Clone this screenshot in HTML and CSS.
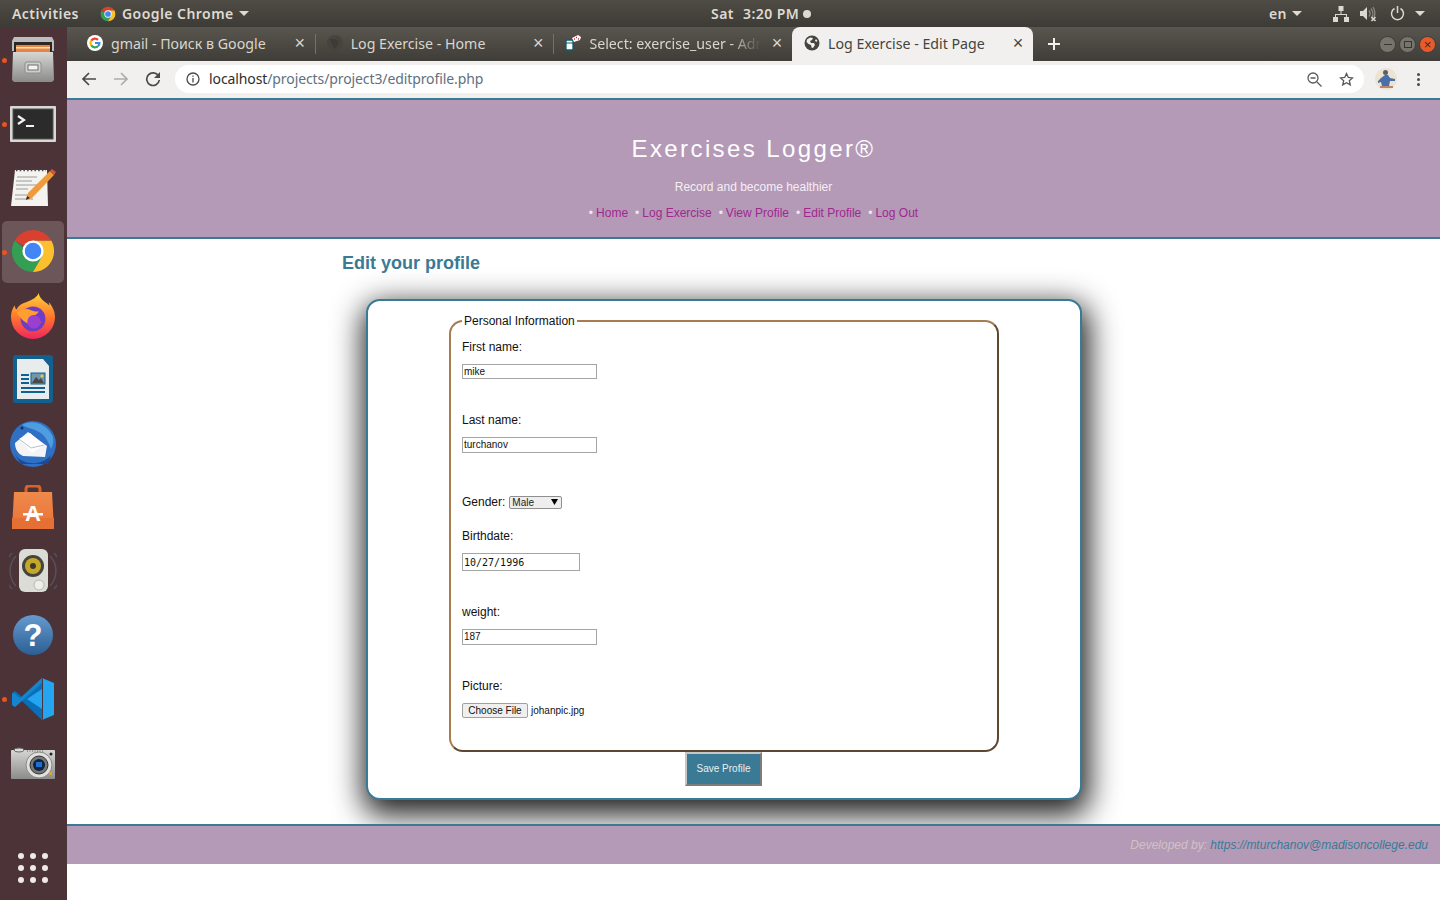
FILE: index.html
```html
<!DOCTYPE html>
<html lang="en">
<head>
  <meta charset="UTF-8">
  <title>Log Exercise - Edit Page</title>
  <link rel="stylesheet" href="styles.css">
</head>
<body>
  <svg class="defs" width="0" height="0">
    <defs>
      <symbol id="chrome" viewBox="0 0 48 48">
        <path fill="#349e53" d="M4.95 13A22 22 0 0 0 24 46L33.53 29.5H24Z"/>
        <path fill="#fbc02d" d="M43.05 13A22 22 0 0 1 24 46L33.53 29.5 24 13Z"/>
        <path fill="#d9402f" d="M24 2A22 22 0 0 1 43.05 13H24L14.47 18.5 4.95 13A22 22 0 0 1 24 2Z"/>
        <circle cx="24" cy="24" r="11" fill="#fff"/>
        <circle cx="24" cy="24" r="8.6" fill="#4285f4"/>
      </symbol>
      <linearGradient id="metal" x1="0" y1="0" x2="0" y2="1">
        <stop offset="0" stop-color="#d6d6d4"/><stop offset="1" stop-color="#8b8b89"/>
      </linearGradient>
      <linearGradient id="bluedisc" x1="0" y1="0" x2="0" y2="1">
        <stop offset="0" stop-color="#659bd0"/><stop offset="1" stop-color="#2c5f93"/>
      </linearGradient>
      <linearGradient id="bag" x1="0" y1="0" x2="0" y2="1">
        <stop offset="0" stop-color="#ee8a4b"/><stop offset="1" stop-color="#ea7235"/>
      </linearGradient>
      <linearGradient id="fox" x1="0" y1="0" x2="0" y2="1">
        <stop offset="0" stop-color="#ffd33d"/><stop offset=".5" stop-color="#ff7a2a"/><stop offset="1" stop-color="#f1255f"/>
      </linearGradient>
    </defs>
  </svg>

  <div class="desktop">
    <header class="panel">
      <div class="panel-left">
        <span class="activities">Activities</span>
        <svg class="panel-chrome" width="16" height="16"><use href="#chrome"/></svg>
        <span>Google Chrome</span>
        <i class="caret"></i>
      </div>
      <div class="panel-clock">
        <span>Sat</span><span>3:20 PM</span><i class="clock-dot"></i>
      </div>
      <div class="panel-right">
        <span class="lang">en</span>
        <i class="caret lang-caret"></i>
        <svg class="tray-net" width="16" height="16" viewBox="0 0 16 16" fill="#dbd8d2">
          <rect x="5.5" y="0" width="5" height="5"/><rect x="0" y="11" width="5" height="5"/><rect x="11" y="11" width="5" height="5"/>
          <path d="M7.5 5h1v3H14v3h-1V9H3v2H2V8h5.500z"/>
        </svg>
        <svg class="tray-vol" width="17" height="16" viewBox="0 0 17 16" fill="none">
          <path fill="#dbd8d2" d="M0 5h3l4-4v13l-4-4H0z"/>
          <path stroke="#8b8880" stroke-width="1.300" d="M9 4.500a5 5 0 0 1 0 6M11 2.500a8 8 0 0 1 0 10M13 1a11 11 0 0 1 1 10"/>
          <path stroke="#dbd8d2" stroke-width="1.600" d="M11.500 11l4 4m0-4l-4 4"/>
        </svg>
        <svg class="tray-power" width="15" height="15" viewBox="0 0 15 15" fill="none" stroke="#dbd8d2" stroke-width="1.500">
          <path d="M4.500 2.500a6 6 0 1 0 6 0M7.500 0v7"/>
        </svg>
        <i class="caret power-caret"></i>
      </div>
    </header>

    <div class="workspace">
      <nav class="dock">
        <div class="dock-item running">
          <svg width="44" height="46" viewBox="0 0 44 46">
            <path fill="#bdbdbb" d="M3 0h38l2 4v10H1V4z"/>
            <rect x="3" y="5" width="38" height="12" fill="#2a2826"/>
            <rect x="5" y="8" width="34" height="7" fill="#e8843c"/>
            <rect x="5" y="10" width="34" height="1.500" fill="#f7e3c4"/>
            <path fill="url(#metal)" d="M2 15h40l1 28-2 2H3l-2-2z"/>
            <rect x="14" y="25" width="16" height="11" rx="2" fill="#cfcfcd" stroke="#8d8d8b"/>
            <rect x="17" y="28" width="10" height="5" fill="#f3f3f1" stroke="#6f6f6d"/>
          </svg>
        </div>
        <div class="dock-item running">
          <svg width="46" height="36" viewBox="0 0 46 36">
            <rect width="46" height="36" rx="1" fill="#d8d8d6"/>
            <rect x="3" y="3" width="40" height="30" fill="#2b2b2b" stroke="#555"/>
            <path d="M8 10l6 4-6 4" fill="none" stroke="#f2f2f2" stroke-width="2.200"/>
            <rect x="16" y="19" width="8" height="2" fill="#f2f2f2"/>
          </svg>
        </div>
        <div class="dock-item">
          <svg width="46" height="44" viewBox="0 0 46 44">
            <path fill="#f4f3ef" d="M5 4h32l1 36H1z"/>
            <path stroke="#444" stroke-width="2.500" stroke-dasharray="1.500 2.200" fill="none" d="M6 4h30"/>
            <path stroke="#9a9a96" stroke-width="1" fill="none" d="M7 11h20M6 15h16M6 19h22M6 23h12M5 29h14M5 33h18"/>
            <path fill="#f09a3a" d="M40 5l4 4-22 23-6 2 2-7z"/>
            <path fill="#d8503f" d="M40 5l2-2 4 3-2 3z"/>
            <path fill="#2b2b2b" d="M16 34l1-4 3 2z"/>
          </svg>
        </div>
        <div class="dock-item running active">
          <svg class="dock-chrome" width="46" height="46"><use href="#chrome"/></svg>
        </div>
        <div class="dock-item">
          <svg width="44" height="46" viewBox="0 0 46 48">
            <path fill="url(#fox)" d="M29 0c1 7 6 8 11 13 0-1 0-3-1-4 5 5 7 11 7 16a23 23 0 0 1-46 0c0-5 2-10 4-12 0 2 1 4 2 4 2-5 6-6 11-8 5-2 10-4 12-9z"/>
            <circle cx="23" cy="27" r="13" fill="#6f3cc4"/>
            <path fill="#ffa02e" d="M6 20c6-4 11-4 15-2 3 1 6 2 8 1-1 3-5 5-9 5 1 4 6 7 12 6-4 4-11 5-16 1-5-3-8-7-10-11z"/>
            <circle cx="24" cy="30" r="7" fill="#9a3fd1"/>
          </svg>
        </div>
        <div class="dock-item">
          <svg width="40" height="48" viewBox="0 0 40 48">
            <rect width="40" height="48" rx="3" fill="#12608f"/>
            <path fill="#e9eced" d="M4 4h26l6 7v33H4z"/>
            <path fill="#12608f" d="M29 1h10v10z"/>
            <path d="M8 20h8M8 24h8M8 28h8M8 33h24M8 37h24" stroke="#12608f" stroke-width="2"/>
            <rect x="18" y="18" width="14" height="11" fill="#6f96aa" stroke="#12608f"/>
            <path fill="#4a4a4a" d="M19 28l4-6 3 3 2-2 3 5z"/>
            <circle cx="29" cy="21" r="1.500" fill="#f4c64a"/>
          </svg>
        </div>
        <div class="dock-item">
          <svg width="48" height="48" viewBox="0 0 48 48">
            <circle cx="24" cy="25" r="23" fill="#2f6fc4"/>
            <path fill="#1c4a94" d="M6 36c8 10 26 12 36 0l-3 9H12z"/>
            <path fill="#4d9de0" d="M13 6C22 0 38 4 44 18c1 4 0 8-2 12-2-6-6-14-12-17-5-3-12-4-17-7z"/>
            <path fill="#f4f4f6" d="M6 24l13-11 19 14-2 11-22-1c-5-2-8-7-8-13z"/>
            <path fill="#fff" d="M10 20l11-6 14 12-12 8z"/>
            <path d="M10 20l12 9 13-3" fill="none" stroke="#b9bfca"/>
            <circle cx="13" cy="9" r="1.500" fill="#16315f"/>
          </svg>
        </div>
        <div class="dock-item">
          <svg width="42" height="44" viewBox="0 0 42 44">
            <path d="M14 12V4c0-2 1-3 3-3h8c2 0 3 1 3 3v8" fill="none" stroke="#d9622c" stroke-width="3"/>
            <path fill="url(#bag)" d="M2 7h38l2 37H0z"/>
            <rect x="0" y="33" width="42" height="11" fill="#e66f33"/>
            <text x="21" y="36" class="bag-letter">A</text>
            <rect x="11" y="28" width="20" height="2.500" fill="#fff"/>
          </svg>
        </div>
        <div class="dock-item">
          <svg width="48" height="46" viewBox="0 0 48 46">
            <path d="M7 8a22 22 0 0 0 0 30M41 8a22 22 0 0 1 0 30M3 5a26 26 0 0 0 0 36M45 5a26 26 0 0 1 0 36" fill="none" stroke="#5a6677" stroke-width="1.500" opacity=".6"/>
            <rect x="10" y="1" width="29" height="43" rx="6" fill="#dcdcd6"/>
            <circle cx="24" cy="18" r="11" fill="#45453f"/>
            <circle cx="24" cy="18" r="8" fill="#c6a828"/>
            <circle cx="24" cy="18" r="3" fill="#3c3a2c"/>
            <circle cx="30" cy="37" r="5" fill="#efefea" stroke="#b8b8b2"/>
          </svg>
        </div>
        <div class="dock-item">
          <svg width="40" height="40" viewBox="0 0 40 40">
            <circle cx="20" cy="20" r="20" fill="url(#bluedisc)"/>
            <text x="20" y="31" class="help-mark">?</text>
          </svg>
        </div>
        <div class="dock-item running">
          <svg width="42" height="42" viewBox="0 0 42 42">
            <path fill="#0a6fb8" d="M30 0L10 19 3 13 0 15v12l3 2 7-6 20 19z"/>
            <path fill="#1a8fd8" d="M0 27l3 2L30 5V0L8 20 2 15 0 16z" opacity=".7"/>
            <path fill="#23a5f1" d="M30 0l12 5v32l-12 5 1-1V1zM30 11L15 21l15 10z"/>
          </svg>
        </div>
        <div class="dock-item">
          <svg width="44" height="32" viewBox="0 0 44 32">
            <rect y="3" width="44" height="29" rx="1" fill="url(#metal)"/>
            <ellipse cx="8" cy="3" rx="5" ry="2" fill="#dcdcda" stroke="#666"/>
            <path d="M16 4h16" stroke="#555" stroke-dasharray="1 1.500"/>
            <circle cx="28" cy="18" r="13" fill="#e0e0de" stroke="#888"/>
            <circle cx="28" cy="18" r="9" fill="#777" stroke="#333"/>
            <circle cx="28" cy="18" r="6" fill="#10233f"/>
            <rect x="25" y="15" width="6" height="5" fill="#1f6fd0"/>
            <rect x="38" y="25" width="3" height="3" fill="#e8a020"/>
            <circle cx="40" cy="7" r="1.500" fill="#222"/>
          </svg>
        </div>
        <div class="dock-apps">
          <i></i><i></i><i></i><i></i><i></i><i></i><i></i><i></i><i></i>
        </div>
      </nav>

      <div class="browser">
        <div class="tabstrip">
          <div class="tab">
            <svg class="favicon" width="16" height="16" viewBox="0 0 16 16" fill="none" stroke-width="2.200">
              <circle cx="8" cy="8" r="8" fill="#fff" stroke="none"/>
              <path stroke="#ea4335" d="M4.300 5.600A4.400 4.400 0 0 1 11 4.900"/>
              <path stroke="#fbbc05" d="M4.300 5.600a4.400 4.400 0 0 0 0 4.800"/>
              <path stroke="#34a853" d="M4.300 10.400a4.400 4.400 0 0 0 6.900.6"/>
              <path stroke="#4285f4" d="M11.200 11A4.400 4.400 0 0 0 12.400 8H8"/>
            </svg>
            <span class="tab-title">gmail - Поиск в Google</span>
            <span class="tab-close">×</span>
          </div>
          <div class="tab">
            <svg class="favicon" width="16" height="16" viewBox="0 0 16 16">
              <circle cx="8" cy="8" r="8" fill="#45443f"/>
              <path fill="#3c3b37" d="M3 4h6l3 4-4 6-3-4z"/>
            </svg>
            <span class="tab-title">Log Exercise - Home</span>
            <span class="tab-close">×</span>
          </div>
          <div class="tab">
            <svg class="favicon" width="16" height="16" viewBox="0 0 16 16">
              <rect x="1" y="5" width="7" height="10" rx="1" fill="#fff" stroke="#0d5f6e" stroke-width="1.300"/>
              <path d="M1 8h7" stroke="#0d5f6e"/>
              <path fill="#fff" d="M7 3l6-3 3 2-1 3-6 2z"/>
              <path d="M9 4h1M11 2.500h1M13 4h1" stroke="#d8262c" stroke-width="1.300"/>
            </svg>
            <span class="tab-title tab-faded">Select: exercise_user - Admin</span>
            <span class="tab-close">×</span>
          </div>
          <div class="tab tab-active">
            <svg class="favicon" width="16" height="16" viewBox="0 0 16 16">
              <circle cx="8" cy="8" r="7.500" fill="#45443f"/>
              <path fill="#f1f0ee" d="M3 4.500l3-2 3 .5-1 2-2 1 1 2h3l1 2-2 3-1.500-.5L7 10 4.500 9 2.500 7zM12 4l1.500 2-1.500 1-1-1.500z"/>
            </svg>
            <span class="tab-title">Log Exercise - Edit Page</span>
            <span class="tab-close">×</span>
          </div>
          <svg class="new-tab" width="12" height="12" viewBox="0 0 12 12"><path d="M6 0v12M0 6h12" stroke="#f1f0ee" stroke-width="2"/></svg>
          <div class="window-controls">
            <span class="win-btn"><i class="win-min"></i></span>
            <span class="win-btn"><i class="win-max"></i></span>
            <span class="win-btn win-close">×</span>
          </div>
        </div>

        <div class="toolbar">
          <svg class="tool" width="16" height="16" viewBox="0 0 16 16" fill="none" stroke="#4a4a4a" stroke-width="1.700"><path d="M15 8H2M8 2L2 8l6 6"/></svg>
          <svg class="tool" width="16" height="16" viewBox="0 0 16 16" fill="none" stroke="#acacac" stroke-width="1.700"><path d="M1 8h13M8 2l6 6-6 6"/></svg>
          <svg class="tool" width="16" height="16" viewBox="0 0 16 16" fill="none" stroke="#4a4a4a" stroke-width="1.700"><path d="M13.500 5A6.300 6.300 0 1 0 14.300 9"/><path fill="#4a4a4a" stroke="none" d="M15 1v6H9z"/></svg>
          <div class="omnibox">
            <svg class="info" width="14" height="14" viewBox="0 0 14 14" fill="none" stroke="#4a4a4a" stroke-width="1.300"><circle cx="7" cy="7" r="6"/><path d="M7 6v4.500M7 3.500v1.300"/></svg>
            <span class="url"><span class="url-host">localhost</span>/projects/project3/editprofile.php</span>
            <svg class="omni-zoom" width="15" height="15" viewBox="0 0 15 15" fill="none" stroke="#5a5a5a" stroke-width="1.300"><circle cx="6" cy="6" r="5"/><path d="M3.500 6h5M10 10l4.500 4.500"/></svg>
            <svg class="omni-star" width="15" height="15" viewBox="0 0 15 15" fill="none" stroke="#5a5a5a" stroke-width="1.300"><path d="M7.500 1.500l1.800 4 4.200.4-3.200 2.800 1 4.200-3.800-2.200-3.800 2.200 1-4.200L1.500 5.900l4.200-.4z"/></svg>
          </div>
          <svg class="avatar" width="22" height="22" viewBox="0 0 22 22">
            <circle cx="11" cy="11" r="11" fill="#ece3d2"/>
            <path fill="#4a6ea8" d="M6 10l4-3h3l2 3 5 1v2l-5 0-1 5H7l-1-4-3 1v-2z"/>
            <circle cx="10.500" cy="4.500" r="2.500" fill="#56606f"/>
            <path fill="#b8866e" d="M5 18h13v2H5z"/>
          </svg>
          <span class="menu-dots"><i></i><i></i><i></i></span>
        </div>

        <div class="page">
          <header class="site-header">
            <h1>Exercises Logger®</h1>
            <p class="tagline">Record and become healthier</p>
            <ul class="site-nav">
              <li><a href="#">Home</a></li>
              <li><a href="#">Log Exercise</a></li>
              <li><a href="#">View Profile</a></li>
              <li><a href="#">Edit Profile</a></li>
              <li><a href="#">Log Out</a></li>
            </ul>
          </header>

          <main class="content">
            <h2>Edit your profile</h2>
            <form class="card">
              <fieldset class="info-set">
                <legend>Personal Information</legend>
                <label class="field-label label-first">First name:</label>
                <input class="text-input" type="text" value="mike">
                <label class="field-label label-after">Last name:</label>
                <input class="text-input input-tall" type="text" value="turchanov">
                <div class="gender-row">
                  <label>Gender:</label>
                  <select class="gender-select"><option>Male</option></select>
                </div>
                <label class="field-label label-birth">Birthdate:</label>
                <input class="date-input" type="text" value="10/27/1996">
                <label class="field-label label-after">weight:</label>
                <input class="text-input input-tall" type="text" value="187">
                <label class="field-label label-after">Picture:</label>
                <div class="file-row">
                  <button class="file-btn" type="button">Choose File</button>
                  <span>johanpic.jpg</span>
                </div>
              </fieldset>
              <button class="save-btn" type="button">Save Profile</button>
            </form>
          </main>

          <footer class="site-footer">
            Developed by: <a href="#">https://mturchanov@madisoncollege.edu</a>
          </footer>
        </div>
      </div>
    </div>
  </div>
</body>
</html>
```

FILE: styles.css
```css
* { box-sizing: border-box; }
html, body { margin: 0; height: 100%; }
body { font-family: "Liberation Sans", Arial, sans-serif; background: #fff; overflow: hidden; }
.defs { position: absolute; }
.desktop { width: 1440px; height: 900px; display: flex; flex-direction: column; }

/* top panel */
.panel { height: 27px; flex: none; display: flex; align-items: center; color: #dedad2; font: 600 14px "Noto Sans", sans-serif; letter-spacing: .45px; background: linear-gradient(#4f4c45, #3d3b36); }
.panel-left { width: 711px; display: flex; align-items: center; padding-left: 12px; }
.activities { margin-right: 21px; }
.panel-chrome { margin-right: 6px; }
.caret { display: block; width: 0; height: 0; border-left: 5px solid transparent; border-right: 5px solid transparent; border-top: 5px solid #dedad2; margin-left: 5px; }
.panel-clock { display: flex; align-items: center; gap: 9px; }
.clock-dot { width: 8px; height: 8px; border-radius: 50%; background: #dedad2; margin-left: -5px; }
.panel-right { margin-left: auto; display: flex; align-items: center; padding-right: 15px; }
.lang-caret { margin-right: 31px; }
.tray-vol { margin-left: 11px; }
.tray-power { margin-left: 13px; }
.power-caret { margin-left: 10px; }

/* dock */
.workspace { flex: 1; display: flex; min-height: 0; }
.dock { width: 67px; flex: none; padding-top: 2px; background: #4b3338; display: flex; flex-direction: column; align-items: flex-start; position: relative; }
.dock-item { width: 62px; height: 62px; flex: none; display: flex; align-items: center; justify-content: center; position: relative; border-radius: 5px; margin: 0 0 1.9px 2px; }
.dock-item.active { background: #6c5659; }
.dock-item.running::before { content: ""; position: absolute; left: 0; top: 29px; width: 5px; height: 5px; border-radius: 50%; background: #e95420; }
.dock-chrome { margin-top: -1px; }
.dock-apps { margin: auto 0 17px 18px; display: grid; grid-template-columns: repeat(3, 6px); gap: 6px; }
.dock-apps i { width: 6px; height: 6px; border-radius: 50%; background: #eeeae8; }
.bag-letter { font: bold 22px "Liberation Sans", sans-serif; fill: #fff; text-anchor: middle; }
.help-mark { font: bold 31px "Liberation Sans", sans-serif; fill: #fff; text-anchor: middle; }

/* browser chrome */
.browser { flex: 1; min-width: 0; display: flex; flex-direction: column; }
.tabstrip { height: 34px; flex: none; display: flex; align-items: center; padding-left: 9px; background: linear-gradient(#59564f, #3f3d38); font: 14.2px "Noto Sans", sans-serif; color: #d9d6cf; }
.tab { width: 238.7px; height: 34px; flex: none; display: flex; align-items: center; padding: 0 9px 2px 11px; position: relative; }
.tab + .tab::before { content: ""; position: absolute; left: 0; top: 7px; width: 1px; height: 20px; background: #74716a; }
.tab + .tab { padding-left: 12px; }
.tab-active { width: 241px; background: #f1f0ee; color: #45443f; border-radius: 8px 8px 0 0; }
.tab + .tab-active::before { display: none; }
.favicon { flex: none; margin-right: 8px; }
.tab-title { flex: 1; white-space: nowrap; overflow: hidden; }
.tab-faded { -webkit-mask-image: linear-gradient(to right, #000 80%, transparent 98%); mask-image: linear-gradient(to right, #000 80%, transparent 98%); }
.tab-close { flex: none; width: 12px; font: 18px "Liberation Sans", sans-serif; text-align: center; margin-left: 6px; }
.new-tab { margin-left: 15px; }
.window-controls { margin-left: auto; margin-right: 4px; display: flex; gap: 3px; }
.win-btn { width: 17px; height: 17px; border-radius: 50%; background: #77746e; border: 1px solid #3f3d38; display: flex; align-items: center; justify-content: center; }
.win-min { width: 8px; height: 1px; background: #37352f; }
.win-max { width: 8px; height: 7px; border: 1px solid #37352f; }
.win-close { background: #e9592a; color: #3b2a22; font: 13px/15px "Liberation Sans", sans-serif; }
.toolbar { height: 37px; flex: none; display: flex; align-items: center; padding: 0 0 1px 14px; background: #f1f0ee; }
.tool { flex: none; margin-right: 16px; }
.omnibox { width: 1189px; height: 28px; margin-left: -2px; display: flex; align-items: center; padding: 0 10px 0 11px; background: #fff; border-radius: 14px; }
.info { margin-right: 9px; }
.url { flex: 1; padding-bottom: 2px; font: 14px "Noto Sans", sans-serif; color: #5f7080; letter-spacing: -.1px; }
.url-host { color: #2e2e2e; }
.omni-zoom { margin-right: 17px; }
.avatar { flex: none; margin-left: 11px; }
.menu-dots { display: flex; flex-direction: column; gap: 2px; margin-left: 20px; }
.menu-dots i { width: 3px; height: 3px; border-radius: 50%; background: #4a4a4a; }

/* the page itself */
.page { flex: 1; min-height: 0; background: #fff; overflow: hidden; }
.site-header { height: 141px; background: #b49ab7; border-top: 2px solid #3a7a94; border-bottom: 2px solid #3a7a94; text-align: center; color: #fff; }
.site-header h1 { margin: 0; padding-top: 35px; font-size: 24px; line-height: 28px; font-weight: normal; letter-spacing: 2.4px; }
.tagline { margin: 17px 0 0; font-size: 12px; line-height: 14px; color: #f4eef4; }
.site-nav { list-style: none; margin: 12px 0 0; padding: 0; display: flex; justify-content: center; gap: 7px; font-size: 12px; line-height: 14px; }
.site-nav li::before { content: "•"; margin-right: 3px; color: #efe6ef; }
.site-nav a { color: #a0288f; text-decoration: none; }
.content { padding-left: 275px; height: 585px; }
.content h2 { margin: 0; padding-top: 14px; font-size: 18px; line-height: 21px; color: #3a7a94; }
.card { width: 716px; height: 501px; margin: 25px 0 0 24px; border: 2px solid #3a7a94; border-radius: 14px; background: #fff; box-shadow: 2px 10px 30px 5px #222; text-align: center; }
.info-set { width: 550px; height: 438px; margin: 13px 0 0 81px; padding: 0 11px; border: 2px solid; border-color: #a97c50 #5e4630 #5e4630 #a97c50; border-radius: 14px; text-align: left; font-size: 12px; line-height: 14px; color: #111; }
.info-set legend { padding: 0 2px; font-size: 12px; }
.field-label { display: block; margin-bottom: 10px; }
.label-first { margin-top: 12px; }
.label-after { margin-top: 34px; }
.label-birth { margin-top: 20px; }
.text-input { display: block; width: 135px; height: 15px; padding: 0 1px; border: 1px solid #a5a5a5; font: 10px "Liberation Sans", sans-serif; color: #111; }
.input-tall { height: 16px; padding-bottom: 1px; }
.gender-row { margin-top: 42px; display: flex; align-items: center; gap: 4px; height: 14px; }
.gender-select { width: 53px; height: 13px; padding: 0 2px; border: 1px solid #8f8f8f; border-radius: 2px; -webkit-appearance: none; appearance: none; font: 10px "Liberation Sans", sans-serif; color: #222; background: #eee url("data:image/svg+xml,%3Csvg xmlns='http://www.w3.org/2000/svg' width='7' height='6'%3E%3Cpath d='M0 0h7L3.500 6z'/%3E%3C/svg%3E") no-repeat right 3px center; }
.date-input { display: block; width: 118px; height: 18px; padding: 0 1px; border: 1px solid #a5a5a5; font: 10px "DejaVu Sans Mono", monospace; color: #111; }
.file-row { display: flex; align-items: center; gap: 3px; height: 15px; font-size: 10px; }
.file-btn { width: 66px; height: 15px; padding: 0; border: 1px solid #a0a0a0; border-radius: 2px; background: #efefef; font: 10px "Liberation Sans", sans-serif; color: #111; }
.save-btn { display: block; width: 77px; height: 34px; margin: 0 0 0 317px; padding: 0 0 2px; border: 2px solid; border-color: #c6c6c6 #7c7c7c #7c7c7c #c6c6c6; background: #3a7a94; color: #e8f0f2; font: 10px "Liberation Sans", sans-serif; }
.site-footer { height: 40px; padding: 12px 12px 0 0; background: #b49ab7; border-top: 2px solid #3a7a94; text-align: right; font-size: 12px; line-height: 14px; font-style: italic; color: #d0c2c4; }
.site-footer a { color: #3a7a94; text-decoration: none; }
```
